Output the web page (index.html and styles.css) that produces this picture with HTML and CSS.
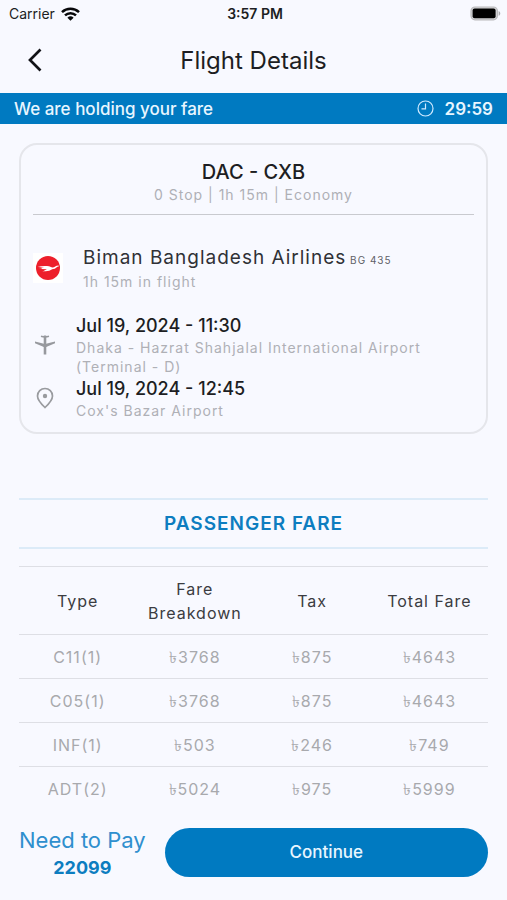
FILE: index.html
```html
<!DOCTYPE html>
<html lang="en">
<head>
<meta charset="utf-8">
<meta name="viewport" content="width=device-width, initial-scale=1">
<title>Flight Details</title>
<link rel="stylesheet" href="styles.css">
</head>
<body>
<div class="status">
  <div class="carrier">
    <span>Carrier</span>
    <svg width="19" height="14" viewBox="0 0 19 14" aria-hidden="true"><g fill="none" stroke="#08080a" stroke-width="2.5"><path d="M1 5.2a12.3 12.3 0 0 1 17 0"/><path d="M4 8.4a8 8 0 0 1 11 0"/></g><path d="M6.4 10.7a4.5 4.5 0 0 1 6.2 0L9.5 13.8z" fill="#08080a"/></svg>
  </div>
  <span class="time">3:57 PM</span>
  <svg class="battery" width="31" height="15" viewBox="0 0 31 15" aria-hidden="true"><rect x="1" y="1" width="26.400" height="12.800" rx="4" fill="#d4d4d7" stroke="#b9b9bc" stroke-width="1.200"/><rect x="2.600" y="2.600" width="23" height="9.600" rx="2" fill="#000"/><path d="M28.600 5c2.200.8 2.200 4 0 4.800z" fill="#a9a9ac"/></svg>
</div>
<header class="header">
  <button class="back" type="button" aria-label="Back"><svg width="14" height="24" viewBox="0 0 14 24"><path d="M12.500 1.500 2 12l10.500 10.500" fill="none" stroke="#111216" stroke-width="2.700"/></svg></button>
  <h1>Flight Details</h1>
</header>
<div class="banner">
  <span>We are holding your fare</span>
  <div class="timer">
    <svg width="17" height="17" viewBox="0 0 17 17" aria-hidden="true"><g fill="none" stroke="#cfeaff" stroke-width="1.200"><circle cx="8.500" cy="8.500" r="7.500"/><path d="M8.500 3.500v5.300H4.500"/></g></svg>
    <span>29:59</span>
  </div>
</div>
<main>
  <section class="card">
    <div class="route">
      <h2>DAC - CXB</h2>
      <p class="muted">0 Stop | 1h 15m | Economy</p>
    </div>
    <div class="airline">
      <span class="logo"><svg width="24" height="24" viewBox="0 0 24 24" aria-hidden="true"><circle cx="12" cy="12" r="12" fill="#ed1f2b"/><path d="M1.500 10.800c4-.9 8-1 11.500-.5l3.200 1.300c2.300.2 3.300-1.900 6.300-2l.5.600c-2.500.4-3.200 2.700-5.800 2.900-1.500.1-2.400 1.200-4 1.600-2.400.6-4.500.2-7 .8 2-.9 3.600-1.500 4.700-2.300l-5.800-.1 1.300-.8-4.300-.3 6-.700z" fill="#fff"/></svg></span>
      <div>
        <h3>Biman Bangladesh Airlines<small> BG 435</small></h3>
        <p class="muted">1h 15m in flight</p>
      </div>
    </div>
    <div class="stop">
      <svg width="22" height="22" viewBox="0 0 22 22" aria-hidden="true"><g fill="none" stroke="#97999e"><path d="M11 1.500v19" stroke-width="2.600"/><path d="M7 2.200q4 1.200 8 0" stroke-width="1.700"/></g><path d="M1 7.500l10 2.500 10-2.500v1.800l-10 4.200-10-4.200z" fill="#97999e"/></svg>
      <div>
        <h4>Jul 19, 2024 - 11:30</h4>
        <p class="muted">Dhaka - Hazrat Shahjalal International Airport (Terminal - D)</p>
      </div>
    </div>
    <div class="stop">
      <svg width="22" height="22" viewBox="0 0 22 22" aria-hidden="true"><path d="M11 20.500C7 16.800 3.500 13.300 3.500 9a7.500 7.500 0 0 1 15 0c0 4.300-3.500 7.800-7.500 11.500z" fill="none" stroke="#999b9f" stroke-width="1.700"/><circle cx="11" cy="9" r="2.200" fill="#999b9f"/></svg>
      <div>
        <h4>Jul 19, 2024 - 12:45</h4>
        <p class="muted">Cox's Bazar Airport</p>
      </div>
    </div>
  </section>
  <h2 class="fare-title">PASSENGER FARE</h2>
  <table class="fares">
    <thead><tr><th scope="col">Type</th><th scope="col">Fare Breakdown</th><th scope="col">Tax</th><th scope="col">Total Fare</th></tr></thead>
    <tbody>
      <tr><td>C11(1)</td><td>৳3768</td><td>৳875</td><td>৳4643</td></tr>
      <tr><td>C05(1)</td><td>৳3768</td><td>৳875</td><td>৳4643</td></tr>
      <tr><td>INF(1)</td><td>৳503</td><td>৳246</td><td>৳749</td></tr>
      <tr><td>ADT(2)</td><td>৳5024</td><td>৳975</td><td>৳5999</td></tr>
    </tbody>
  </table>
</main>
<footer class="pay">
  <div class="total"><span>Need to Pay</span><strong>22099</strong></div>
  <button class="continue" type="button">Continue</button>
</footer>
</body>
</html>
```
FILE: styles.css
```css
* { box-sizing: border-box; }
body {
  margin: 0;
  min-height: 100vh;
  display: flex;
  flex-direction: column;
  background: #f8f9ff;
  color: #1d1e23;
  font-family: Inter, "Noto Sans", sans-serif;
}
h1, h2, h3, h4, p { margin: 0; font-weight: 500; }
button { border: 0; font: inherit; cursor: pointer; }
svg { display: block; flex: none; }

.status {
  display: grid;
  grid-template-columns: 1fr auto 1fr;
  align-items: center;
  height: 27px;
  padding: 0 6px 0 9px;
  font-size: 14px;
}
.carrier { display: flex; align-items: center; gap: 6px; }
.time { font-weight: 600; }
.battery { justify-self: end; }

.header {
  display: grid;
  grid-template-columns: 48px 1fr 48px;
  align-items: center;
  height: 66px;
  padding: 0 11px;
}
.back { display: grid; place-items: center; height: 48px; padding: 0; background: none; }
h1 { text-align: center; font-size: 24px; font-weight: 400; }

.banner {
  display: flex;
  justify-content: space-between;
  align-items: center;
  height: 31px;
  padding: 0 14px;
  background: #007ac1;
  color: #e8f6ff;
  font-size: 17px;
  font-weight: 500;
}
.timer { display: flex; align-items: center; gap: 11px; font-weight: 600; }
.muted, h3, .fare-title, .fares { letter-spacing: 1px; }

main { padding: 19px 19px 0; }
.card {
  border: 2px solid #e5e6eb;
  border-radius: 18px;
  padding: 14px 12px 12px;
}
.muted { color: #afb0b6; font-size: 14px; line-height: 19px; font-weight: 400; }
.route { padding-bottom: 10px; border-bottom: 1px solid #c9cacf; text-align: center; }
.route h2 { font-size: 20px; line-height: 26px; }
.airline { display: flex; align-items: center; gap: 20px; padding-top: 29px; }
.logo { display: grid; place-items: center; width: 30px; height: 30px; background: #fff; }
h3 { font-size: 19px; line-height: 28px; font-weight: 400; color: #303136; }
small { font-size: 10px; line-height: 10px; color: #606167; }
.stop { display: flex; align-items: center; gap: 20px; padding-left: 1px; }
.airline + .stop { margin-top: 22px; }
.stop h4 { font-size: 18px; line-height: 25px; }

.fare-title {
  margin-top: 64px;
  border: solid #dcebf8;
  border-width: 2px 0;
  text-align: center;
  color: #0d7dc0;
  font-size: 19px;
  line-height: 47px;
  font-weight: 600;
}
.fares {
  width: 100%;
  margin-top: 17px;
  border-collapse: collapse;
  table-layout: fixed;
  border-top: 1px solid #dedfe5;
  text-align: center;
  font-size: 16px;
  line-height: 24px;
}
th, td { padding: 10px 4px 9px; }
th { font-weight: 400; color: #3b3c41; }
td { color: #a8a9ad; }
tbody tr { border-top: 1px solid #dedfe5; }

.pay {
  display: flex;
  align-items: center;
  gap: 19px;
  margin-top: auto;
  padding: 0 19px 18px;
}
.total { display: flex; flex-direction: column; align-items: center; padding-top: 4px; color: #0d7dc0; line-height: 28px; }
.total span { font-size: 22px; color: #2f8fce; white-space: nowrap; }
.total strong { font-size: 18px; }
.continue {
  flex: 1;
  height: 49px;
  border-radius: 25px;
  background: #007ac1;
  color: #e8f6ff;
  font-size: 17px;
  font-weight: 500;
}
```
